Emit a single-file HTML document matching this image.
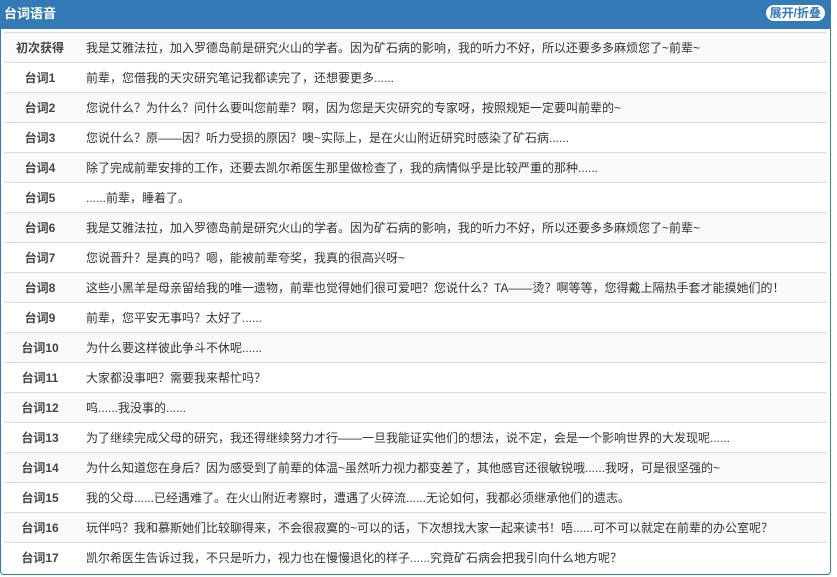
<!DOCTYPE html><html><head><meta charset="utf-8"><style>
body{margin:0;background:#fff;font-family:"Liberation Sans","Noto Sans CJK SC",sans-serif;font-size:12px;color:#333}
.p{position:absolute;left:0;top:0;width:829px;height:574px;border:1px solid #337ab7;border-top:none;border-radius:0 0 4px 4px}
.h{height:29px;background:#337ab7;color:#fff;font-weight:bold;font-size:13px;line-height:27px;padding-left:4px;position:relative;margin:0 -1px}
.b{position:absolute;right:6px;top:5px;background:#fff;color:#337ab7;border-radius:8px;font-size:12px;line-height:16px;padding:0 4px}
table{position:absolute;left:3px;top:32px;width:823px;border-collapse:collapse}
td{height:29px;border-top:1px solid #ddd;padding:0;vertical-align:middle}
tr:nth-child(odd){background:#f9f9f9}
td.l{width:72px;text-align:center;font-weight:bold;color:#444}
td.c{padding-left:10px}
</style></head><body><div class="p"><div class="h">台词语音<span class="b">展开/折叠</span></div>
<table>
<tr><td class="l">初次获得</td><td class="c">我是艾雅法拉，加入罗德岛前是研究火山的学者。因为矿石病的影响，我的听力不好，所以还要多多麻烦您了~前辈~</td></tr>
<tr><td class="l">台词1</td><td class="c">前辈，您借我的天灾研究笔记我都读完了，还想要更多......</td></tr>
<tr><td class="l">台词2</td><td class="c">您说什么？为什么？问什么要叫您前辈？啊，因为您是天灾研究的专家呀，按照规矩一定要叫前辈的~</td></tr>
<tr><td class="l">台词3</td><td class="c">您说什么？原——因？听力受损的原因？噢~实际上，是在火山附近研究时感染了矿石病......</td></tr>
<tr><td class="l">台词4</td><td class="c">除了完成前辈安排的工作，还要去凯尔希医生那里做检查了，我的病情似乎是比较严重的那种......</td></tr>
<tr><td class="l">台词5</td><td class="c">......前辈，睡着了。</td></tr>
<tr><td class="l">台词6</td><td class="c">我是艾雅法拉，加入罗德岛前是研究火山的学者。因为矿石病的影响，我的听力不好，所以还要多多麻烦您了~前辈~</td></tr>
<tr><td class="l">台词7</td><td class="c">您说晋升？是真的吗？嗯，能被前辈夸奖，我真的很高兴呀~</td></tr>
<tr><td class="l">台词8</td><td class="c">这些小黑羊是母亲留给我的唯一遗物，前辈也觉得她们很可爱吧？您说什么？TA——烫？啊等等，您得戴上隔热手套才能摸她们的！</td></tr>
<tr><td class="l">台词9</td><td class="c">前辈，您平安无事吗？太好了......</td></tr>
<tr><td class="l">台词10</td><td class="c">为什么要这样彼此争斗不休呢......</td></tr>
<tr><td class="l">台词11</td><td class="c">大家都没事吧？需要我来帮忙吗？</td></tr>
<tr><td class="l">台词12</td><td class="c">呜......我没事的......</td></tr>
<tr><td class="l">台词13</td><td class="c">为了继续完成父母的研究，我还得继续努力才行——一旦我能证实他们的想法，说不定，会是一个影响世界的大发现呢......</td></tr>
<tr><td class="l">台词14</td><td class="c">为什么知道您在身后？因为感受到了前辈的体温~虽然听力视力都变差了，其他感官还很敏锐哦......我呀，可是很坚强的~</td></tr>
<tr><td class="l">台词15</td><td class="c">我的父母......已经遇难了。在火山附近考察时，遭遇了火碎流......无论如何，我都必须继承他们的遗志。</td></tr>
<tr><td class="l">台词16</td><td class="c">玩伴吗？我和慕斯她们比较聊得来，不会很寂寞的~可以的话，下次想找大家一起来读书！唔......可不可以就定在前辈的办公室呢？</td></tr>
<tr><td class="l">台词17</td><td class="c">凯尔希医生告诉过我，不只是听力，视力也在慢慢退化的样子......究竟矿石病会把我引向什么地方呢？</td></tr>
</table></div></body></html>
